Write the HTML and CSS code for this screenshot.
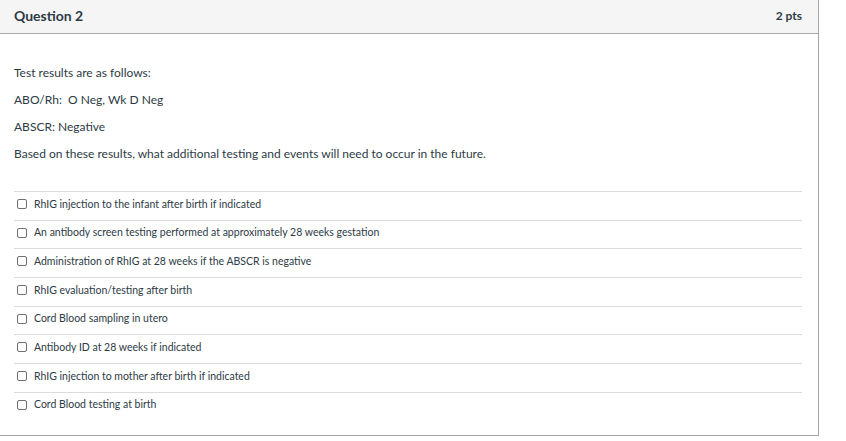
FILE: index.html
```html
<!DOCTYPE html>
<html>
<head>
<meta charset="utf-8">
<link rel="stylesheet" href="styles.css">
</head>
<body>
<div class="card">
  <div class="card-header">
    <span class="title">Question 2</span>
    <span class="pts">2 pts</span>
  </div>
  <div class="card-body">
    <div class="question">
      <p>Test results are as follows:</p>
      <p>ABO/Rh:&nbsp; O Neg, Wk D Neg</p>
      <p>ABSCR: Negative</p>
      <p>Based on these results, what additional testing and events will need to occur in the future.</p>
    </div>
    <ul class="answers">
      <li><span class="box"></span><span>RhIG injection to the infant after birth if indicated</span></li>
      <li><span class="box"></span><span>An antibody screen testing performed at approximately 28 weeks gestation</span></li>
      <li><span class="box"></span><span>Administration of RhIG at 28 weeks if the ABSCR is negative</span></li>
      <li><span class="box"></span><span>RhIG evaluation/testing after birth</span></li>
      <li><span class="box"></span><span>Cord Blood sampling in utero</span></li>
      <li><span class="box"></span><span>Antibody ID at 28 weeks if indicated</span></li>
      <li><span class="box"></span><span>RhIG injection to mother after birth if indicated</span></li>
      <li><span class="box"></span><span>Cord Blood testing at birth</span></li>
    </ul>
  </div>
</div>
</body>
</html>
```
FILE: styles.css
```css
html, body {
  margin: 0;
  padding: 0;
  background: #fff;
}
body {
  font-family: Lato, "Liberation Sans", sans-serif;
  color: #2d3b45;
}
.card {
  width: 818px;
  height: 435px;
  border-right: 1px solid #a5a5a5;
  border-bottom: 1px solid #a5a5a5;
  box-sizing: content-box;
}
.card-header {
  height: 33px;
  background: #f5f5f5;
  border-bottom: 1px solid #a8a8a8;
  display: flex;
  justify-content: space-between;
  align-items: center;
  padding: 0 16px 0 14px;
  box-sizing: content-box;
}
.title {
  font-weight: 700;
  font-size: 14px;
  margin-top: -2px;
}
.pts {
  font-weight: 700;
  font-size: 12px;
  margin-top: -2px;
}
.card-body {
  padding: 30px 16px 0 14px;
}
.question p {
  margin: 0 0 9px;
  font-size: 12px;
  line-height: 18px;
}
.answers {
  list-style: none;
  margin: 28px 0 0;
  padding: 0;
}
.answers li {
  border-top: 1px solid #dcdcdc;
  height: 24.2px;
  display: flex;
  align-items: flex-start;
  padding-top: 3.5px;
  box-sizing: content-box;
  font-size: 10.5px;
  line-height: 16px;
}
.box {
  width: 8px;
  height: 8px;
  border: 1px solid #6f6f6f;
  border-radius: 2px;
  margin: 3.5px 7px 0 3px;
  flex: none;
}
```
